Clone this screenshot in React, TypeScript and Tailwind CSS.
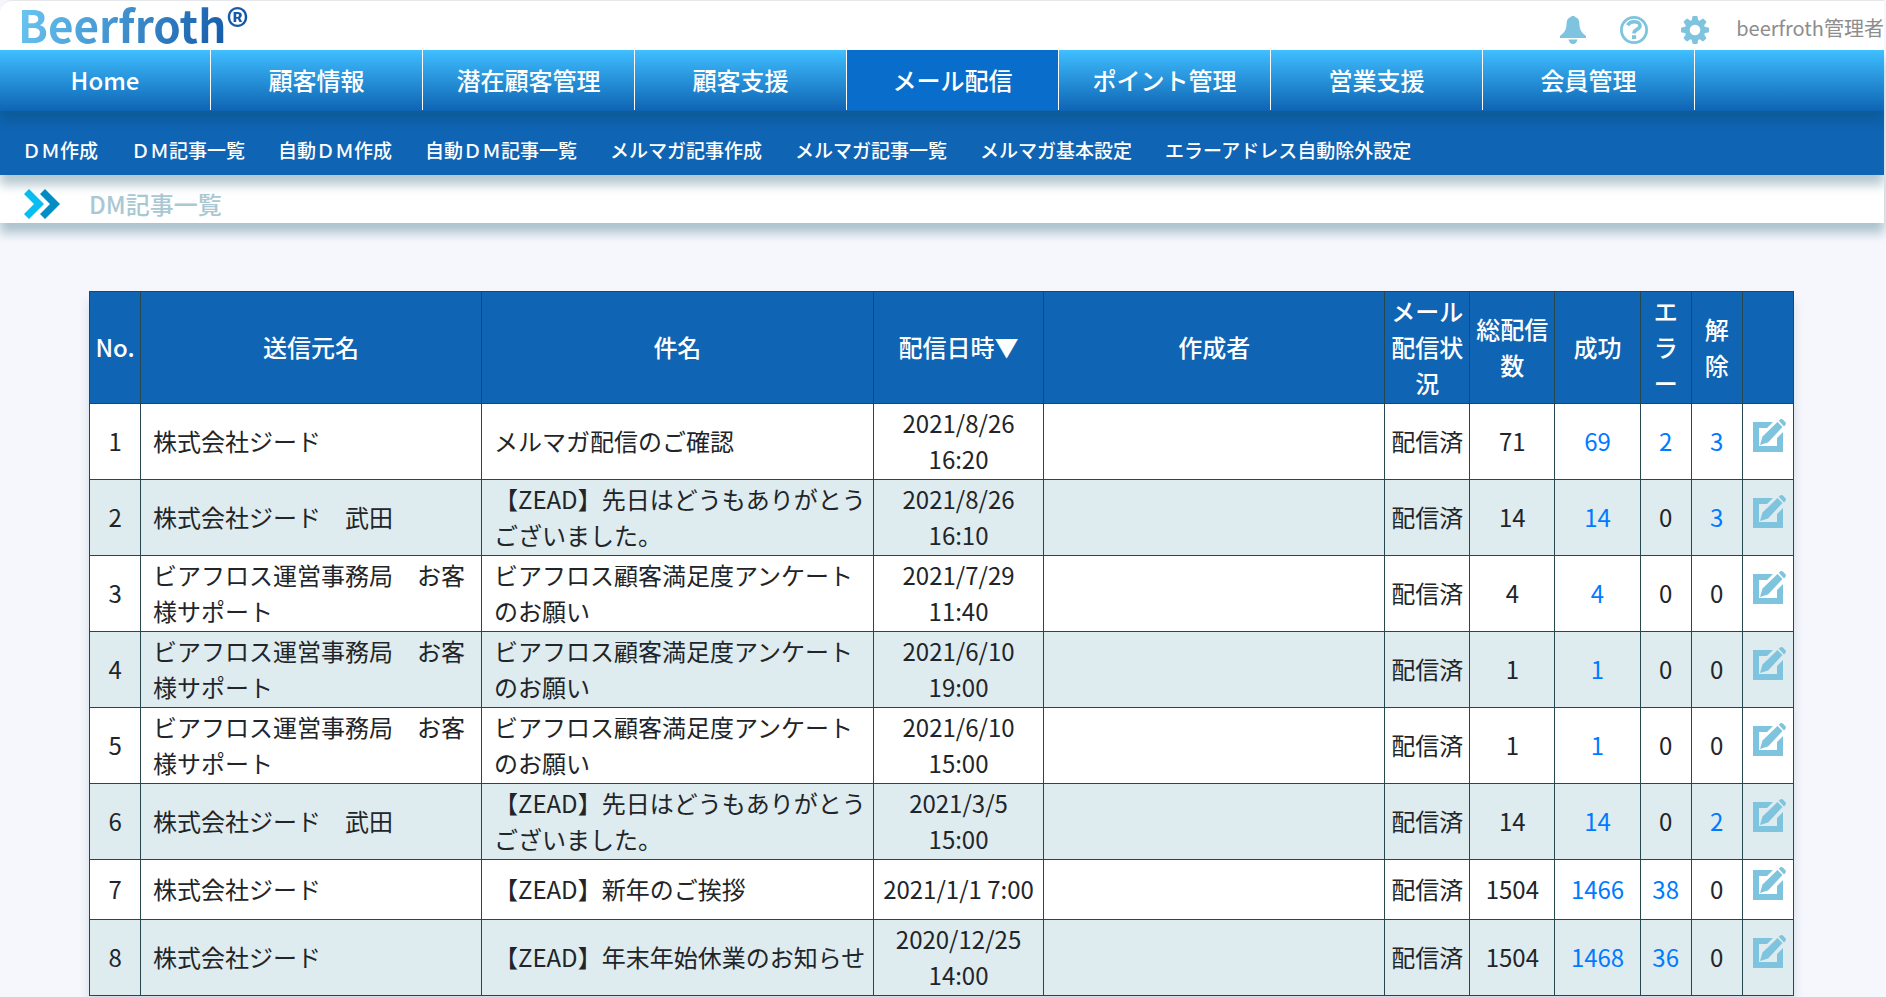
import React from "react";

const NAV = ["Home", "顧客情報", "潜在顧客管理", "顧客支援", "メール配信", "ポイント管理", "営業支援", "会員管理"];
const ACTIVE = "メール配信";

const SUB_NAV = [
  "ＤＭ作成",
  "ＤＭ記事一覧",
  "自動ＤＭ作成",
  "自動ＤＭ記事一覧",
  "メルマガ記事作成",
  "メルマガ記事一覧",
  "メルマガ基本設定",
  "エラーアドレス自動除外設定",
];

const COLUMNS = [
  { label: "No.", width: "w-[3%]" },
  { label: "送信元名", width: "w-[20%]" },
  { label: "件名", width: "w-[23%]" },
  { label: "配信日時▼", width: "w-[10%]" },
  { label: "作成者", width: "w-[20%]" },
  { label: "メール配信状況", width: "w-[5%]" },
  { label: "総配信数", width: "w-[5%]" },
  { label: "成功", width: "w-[5%]" },
  { label: "エラー", width: "w-[3%]" },
  { label: "解除", width: "w-[3%]" },
  { label: "", width: "w-[3%]" },
];

type Mail = {
  from: string;
  subject: string;
  date: string;
  total: number;
  ok: number;
  error: number;
  cancel: number;
};

const MAILS: Mail[] = [
  { from: "株式会社ジード", subject: "メルマガ配信のご確認", date: "2021/8/26 16:20", total: 71, ok: 69, error: 2, cancel: 3 },
  { from: "株式会社ジード　武田", subject: "【ZEAD】先日はどうもありがとうございました。", date: "2021/8/26 16:10", total: 14, ok: 14, error: 0, cancel: 3 },
  { from: "ビアフロス運営事務局　お客様サポート", subject: "ビアフロス顧客満足度アンケートのお願い", date: "2021/7/29 11:40", total: 4, ok: 4, error: 0, cancel: 0 },
  { from: "ビアフロス運営事務局　お客様サポート", subject: "ビアフロス顧客満足度アンケートのお願い", date: "2021/6/10 19:00", total: 1, ok: 1, error: 0, cancel: 0 },
  { from: "ビアフロス運営事務局　お客様サポート", subject: "ビアフロス顧客満足度アンケートのお願い", date: "2021/6/10 15:00", total: 1, ok: 1, error: 0, cancel: 0 },
  { from: "株式会社ジード　武田", subject: "【ZEAD】先日はどうもありがとうございました。", date: "2021/3/5 15:00", total: 14, ok: 14, error: 0, cancel: 2 },
  { from: "株式会社ジード", subject: "【ZEAD】新年のご挨拶", date: "2021/1/1 7:00", total: 1504, ok: 1466, error: 38, cancel: 0 },
  { from: "株式会社ジード", subject: "【ZEAD】年末年始休業のお知らせ", date: "2020/12/25 14:00", total: 1504, ok: 1468, error: 36, cancel: 0 },
];

const CELL = "border border-[#27474e] pt-px pb-0.5";

const BellIcon = () => (
  <svg viewBox="0 0 26 28" className="h-7 w-[26px]" fill="currentColor">
    <path d="M13 0c1.200 0 2 .5 2.600 1.300C18 2 19.200 4 19.400 7.500c.3 6 1.400 8.500 6.600 12.500v2H0v-2C5.200 16 6.300 13.500 6.600 7.500 6.800 4 8 2 10.400 1.300 11 .5 11.800 0 13 0z" />
    <path d="M8.500 23.500h9c-.4 2.700-2.200 4.500-4.500 4.500s-4.100-1.800-4.500-4.500z" />
  </svg>
);

const HelpIcon = () => (
  <svg viewBox="0 0 28 28" className="size-7" fill="none" stroke="currentColor">
    <circle cx="14" cy="14" r="12.600" strokeWidth="2.800" />
    <path d="M7.500 9.200C9 6.800 11.200 5.700 14 5.700c3.400 0 6 1.500 6 4.100 0 3.800-6 3.400-6 7.600" strokeWidth="3.600" />
    <path d="M12 19.200h4.200v3.800H12z" fill="currentColor" stroke="none" />
  </svg>
);

const TEETH = [0, 45, 90, 135, 180, 225, 270, 315];

const GearIcon = () => (
  <svg viewBox="0 0 28 28" className="size-7" fill="currentColor">
    {TEETH.map((angle) => (
      <path key={angle} d="M10.400 6l1-5.200c.1-.5.500-.8 1-.8h3.200c.5 0 .9.300 1 .8l1 5.200z" transform={`rotate(${angle} 14 14)`} />
    ))}
    <circle cx="14" cy="14" r="7.800" fill="none" stroke="currentColor" strokeWidth="5" />
  </svg>
);

const EditIcon = () => (
  <svg viewBox="0 0 33 33" className="size-[33px]" fill="currentColor">
    <path d="M0 3h20l-6 6H6v18h18v-8l6-6v20H0z" />
    <path d="M7 26l2.500-8.500L24.500 3l5 5L15 23.500z" />
    <path d="M25.800 1.800l1-1c1-1 2.300-1 3.300 0l2.100 2.100c1 1 1 2.300 0 3.300l-1.200 1.200z" />
  </svg>
);

const Count = ({ value }: { value: number }) =>
  value > 0 ? (
    <a href="#" className="text-[#007bff]">
      {value}
    </a>
  ) : (
    <>{value}</>
  );

const TopBar = () => (
  <header className="flex h-[50px] items-start justify-between rounded-tl-xl border-t border-gray-200 bg-white pl-[18px]">
    <a
      href="#"
      className="bg-linear-[110deg] from-[#6cc8f2] to-[#0b4ea2] bg-clip-text text-[44px] leading-[47px] font-bold text-transparent"
    >
      Beerfroth®
    </a>
    <div className="flex items-center pt-[15px] text-[#7fc4df]">
      <button aria-label="お知らせ" className="mr-[34px]">
        <BellIcon />
      </button>
      <button aria-label="ヘルプ" className="mr-[33px]">
        <HelpIcon />
      </button>
      <button aria-label="設定" className="mr-[27px]">
        <GearIcon />
      </button>
      <span className="pb-1 text-xl leading-6 text-[#8d8d8d]">beerfroth管理者</span>
    </div>
  </header>
);

export default function App() {
  return (
    <div
      lang="ja"
      className="min-h-screen overflow-hidden bg-[#f5f7fc] pr-0.5 font-['Noto_Sans_CJK_JP',sans-serif] text-2xl leading-9 text-[#212529]"
    >
      <TopBar />

      {/* メインメニュー */}
      <nav className="relative z-20 flex h-[61px] bg-linear-to-b from-[#40bfff] to-[#0f64b4] font-medium text-white shadow-[0_10px_10px_rgba(7,74,95,0.3)]">
        {NAV.map((item) => (
          <a
            key={item}
            href="#"
            className={
              item === ACTIVE
                ? "mb-px flex w-[212px] items-center justify-center border-r border-white bg-[#086dcb]"
                : "mb-px flex w-[212px] items-center justify-center border-r border-white first:w-[211px]"
            }
          >
            {item}
          </a>
        ))}
      </nav>

      {/* サブメニュー */}
      <nav className="relative z-10 flex h-16 items-end gap-[33px] bg-[#0f64b4] px-[22px] pb-[11px] text-[19px] leading-7 font-medium text-white shadow-[0_10px_10px_rgba(7,74,95,0.3)]">
        {SUB_NAV.map((item) => (
          <a key={item} href="#">
            {item}
          </a>
        ))}
      </nav>

      <div className="flex h-12 items-center gap-[29px] bg-white pt-2.5 pl-6 shadow-[0_10px_10px_rgba(7,74,95,0.3)]">
        <svg viewBox="0 0 36 30" className="h-[30px] w-9">
          <path d="M0 5l5-5 15 15L5 30l-5-5 10-10z" fill="#08bdf0" />
          <path d="M16 5l5-5 15 15-15 15-5-5 10-10z" fill="#048cc4" />
        </svg>
        <h1 className="font-medium text-[#a9c8d3]">DM記事一覧</h1>
      </div>

      <main className="pt-[68px] pr-[90px] pl-[89px]">
        <table className="w-full table-fixed border-collapse bg-white text-center shadow-[0_10px_10px_rgba(15,60,110,0.15)]">
          <thead className="bg-[#0f64b4] text-white">
            <tr>
              {COLUMNS.map((col) => (
                <th key={col.label} className={`${CELL} ${col.width} px-1 font-medium break-all`}>
                  {col.label}
                </th>
              ))}
            </tr>
          </thead>
          <tbody>
            {MAILS.map((mail, i) => (
              <tr key={i} className="h-15 even:bg-[#deebef]">
                <td className={CELL}>{i + 1}</td>
                <td className={`${CELL} px-3 text-left`}>{mail.from}</td>
                <td className={`${CELL} pr-1 pl-3 text-left`}>{mail.subject}</td>
                <td className={`${CELL} px-1`}>{mail.date}</td>
                <td className={CELL}></td>
                <td className={CELL}>配信済</td>
                <td className={CELL}>{mail.total}</td>
                <td className={CELL}>
                  <Count value={mail.ok} />
                </td>
                <td className={CELL}>
                  <Count value={mail.error} />
                </td>
                <td className={CELL}>
                  <Count value={mail.cancel} />
                </td>
                <td className="border border-[#27474e] pb-3">
                  <a href="#" aria-label="編集" className="flex justify-center pl-1 text-[#7fc4df]">
                    <EditIcon />
                  </a>
                </td>
              </tr>
            ))}
          </tbody>
        </table>
      </main>
    </div>
  );
}
